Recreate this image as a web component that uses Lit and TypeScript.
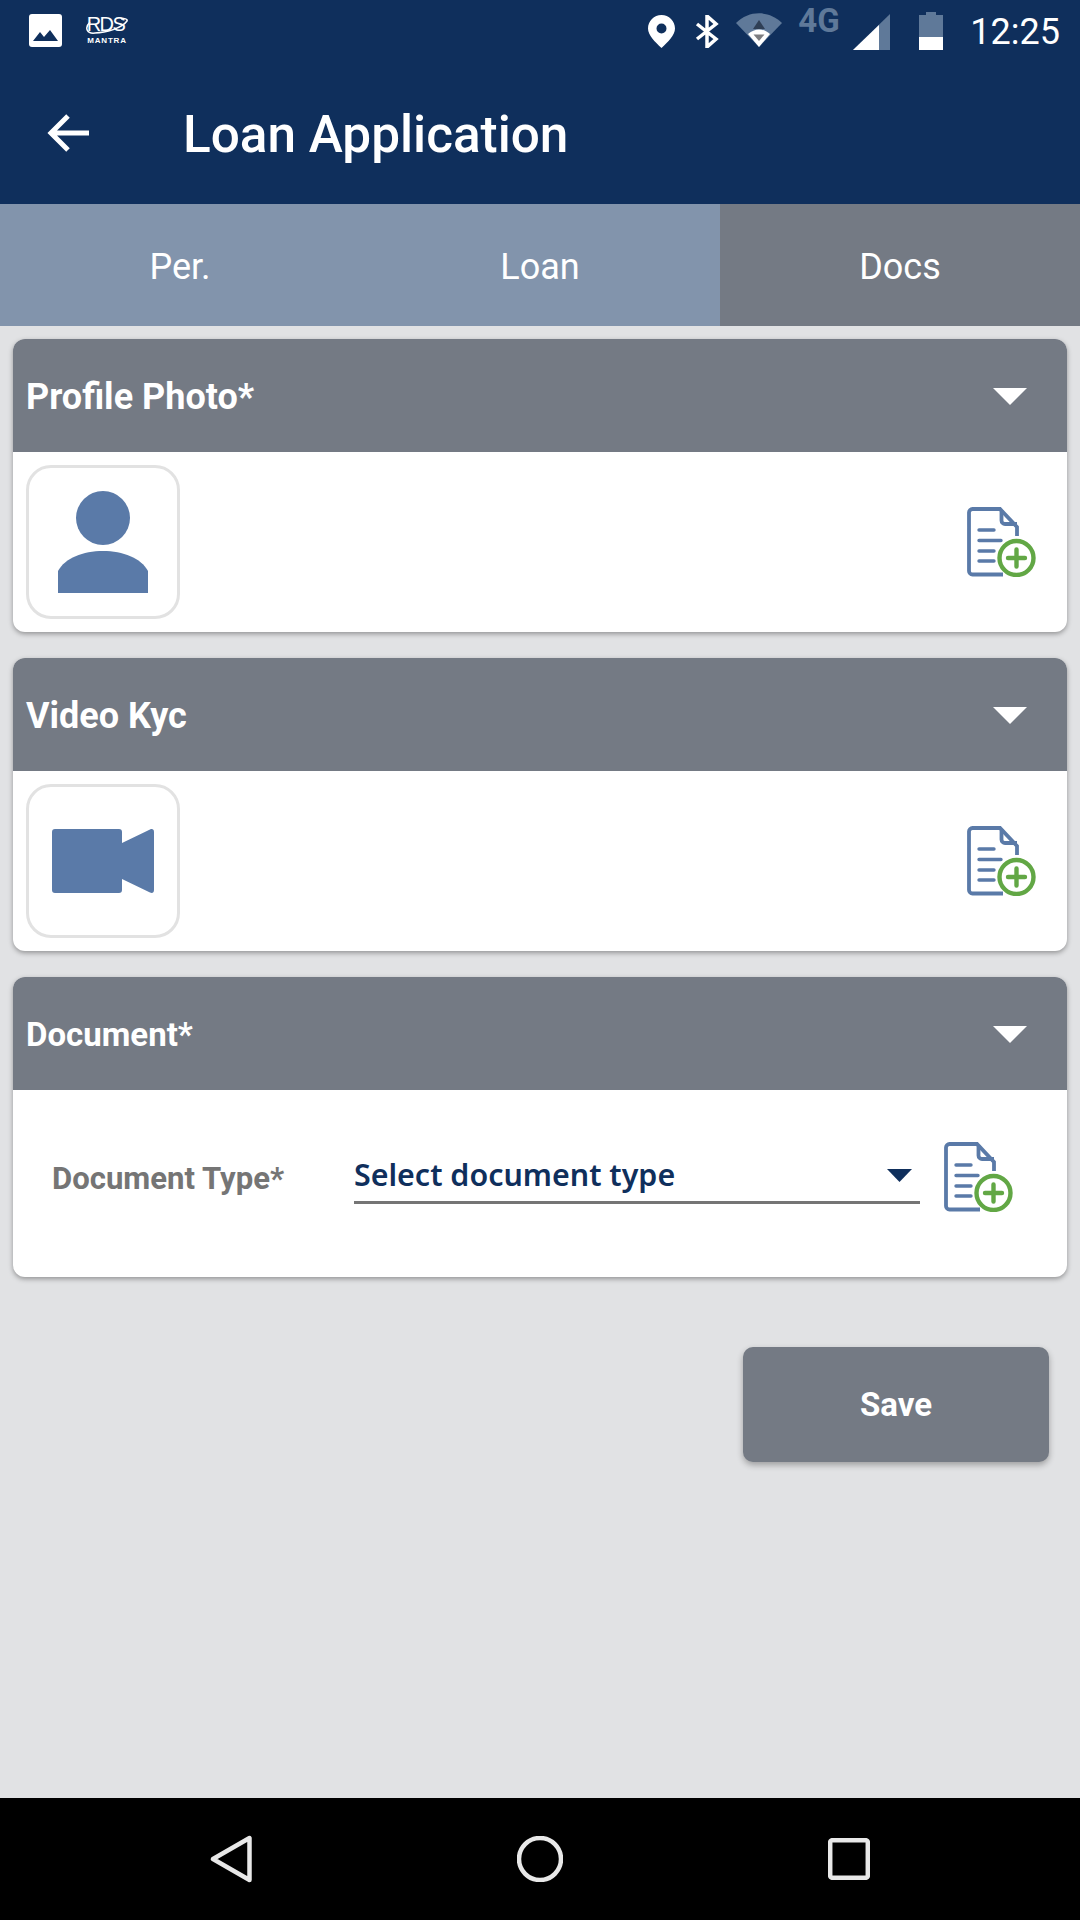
import { LitElement, html, css } from "lit";
import { customElement } from "lit/decorators.js";

const docIcon = html`<svg class="doc" viewBox="0 0 70 70" fill="none">
  <path d="M36 67.500H5.500a3.500 3.500 0 0 1-3.500-3.500V5.500A3.500 3.500 0 0 1 5.500 2H33L50 20V29" stroke="#5a7aa8" stroke-width="3.800"/>
  <path d="M34.500 3V13.500a3.500 3.500 0 0 0 3.500 3.500H50" stroke="#5a7aa8" stroke-width="3.800"/>
  <g stroke="#5a7aa8" stroke-width="3.400" stroke-linecap="round"><path d="M12 23H27M12 33.500H34M12 44H27M12 54H27"/></g>
  <circle cx="49.500" cy="51" r="17" fill="#fff" stroke="#62a745" stroke-width="4.400"/>
  <path d="M49.500 42.500V59.500M41 51H58" stroke="#62a745" stroke-width="4.400" stroke-linecap="round"/>
</svg>`;

const chevron = html`<svg class="chev" viewBox="0 0 34 17"><path d="M0 0H34L17 17Z" fill="#fff"/></svg>`;

@customElement("app-root")
export class AppRoot extends LitElement {
  static styles = css`
    :host { display: flex; flex-direction: column; width: 1080px; height: 1920px; font-family: Roboto, sans-serif; background: #e1e2e4; overflow: hidden; }
    .head { background: #0f2f5c; height: 204px; display: flex; flex-direction: column; flex: none; }
    .status { height: 64px; display: flex; align-items: flex-start; color: #fff; position: relative; }
    .status svg { display: block; flex: none; }
    .pic { width: 33px; height: 33px; margin: 14px 0 0 29px; }
    .logo { width: 42px; height: 30px; margin: 15px 0 0 24px; position: relative; display: flex; flex-direction: column; align-items: center; }
    .logo .r { font: 400 20px/18px "Liberation Sans Narrow", "Liberation Sans", sans-serif; letter-spacing: -1.500px; color: #fff; margin-left: -3px; }
    .logo .m { font: 700 8px/8px "Liberation Sans", sans-serif; letter-spacing: .8px; color: #fff; margin-top: 4px; }
    .logo svg.arc { position: absolute; left: 0; top: 2px; width: 42px; height: 20px; }
    .spacer { flex: 1; }
    .loc { width: 27px; height: 33px; margin-top: 15px; }
    .bt { width: 24px; height: 33px; margin: 15px 0 0 20px; }
    .wifi { width: 46px; height: 34px; margin: 13px 0 0 17px; }
    .g4 { font: 700 33px/24px Roboto, sans-serif; color: #5f7999; margin: 9px 0 0 16px; width: 44px; white-space: nowrap; }
    .sig { width: 37px; height: 36px; margin: 14px 0 0 11px; }
    .bat { width: 24px; height: 38px; margin: 12px 0 0 29px; }
    .time { font: 400 36px/34px Roboto, sans-serif; margin: 15px 20px 0 27px; }
    .bar { flex: 1; display: flex; align-items: center; color: #fff; }
    .back { width: 44px; height: 40px; margin-left: 47px; flex: none; margin-bottom: 2px; }
    .title { font: 500 51.300px/56px Roboto, sans-serif; margin-left: 92px; padding-top: 2px; }
    .tabs { height: 122px; flex: none; display: grid; grid-template-columns: repeat(3, 1fr); background: #8294ac; }
    .tab { display: flex; align-items: center; justify-content: center; color: #fff; font: 400 36px/40px Roboto, sans-serif; padding-top: 4px; }
    .tab.on { background: #747a84; }
    main { flex: 1; padding: 13px 13px 0; display: flex; flex-direction: column; gap: 26px; }
    .card { background: #fff; border-radius: 12px; box-shadow: 0 2px 5px rgba(0,0,0,.35); overflow: hidden; }
    .chd { height: 113px; background: #747a84; display: flex; align-items: center; justify-content: space-between; padding: 3px 40px 0 13px; box-sizing: border-box; color: #fff; font: 700 36px/44px Roboto, sans-serif; }
    .chd .small { font-size: 33px; }
    .chev { width: 34px; height: 17px; display: block; margin-bottom: 1px; }
    .cbd { height: 180px; display: flex; align-items: center; justify-content: space-between; padding: 0 30px 0 13px; box-sizing: border-box; }
    .box { width: 154px; height: 154px; box-sizing: border-box; border: 3px solid #e2e2e2; border-radius: 25px; display: flex; align-items: center; justify-content: center; }
    .box svg { display: block; }
    .doc { width: 70px; height: 70px; display: block; flex: none; }
    .form { height: 187px; display: flex; align-items: center; padding: 0 52px 0 39px; box-sizing: border-box; }
    .form .doc { margin-bottom: 14px; margin-left: 1px; }
    .lbl { font: 700 31.100px/36px Roboto, sans-serif; color: #757575; width: 302px; flex: none; margin-bottom: 10px; }
    .sel { width: 566px; height: 48px; box-sizing: border-box; border-bottom: 3px solid #757575; display: flex; align-items: center; justify-content: space-between; padding: 0 8px 6px 0; color: #0f2f5c; font: 600 30.400px/40px "Noto Sans", sans-serif; margin: 0 23px 8px 0; flex: none; }
    .sel svg { width: 25px; height: 13px; display: block; }
    .actions { display: flex; justify-content: flex-end; padding: 44px 18px 0 0; }
    .save { width: 306px; height: 115px; background: #747a84; color: #fff; border-radius: 10px; font: 700 33px/40px Roboto, sans-serif; box-shadow: 0 3px 6px rgba(0,0,0,.3); display: flex; align-items: center; justify-content: center; padding-top: 1px; box-sizing: border-box; }
    .nav { height: 122px; flex: none; background: #000; display: grid; grid-template-columns: repeat(3, 360px); justify-items: center; align-items: center; }
    .nav svg { display: block; }
    .nav .left { justify-self: end; margin-right: 108px; }
    .nav .right { justify-self: start; margin-left: 108px; }
  `;

  card(title: string, icon: unknown) {
    return html`<section class="card">
      <div class="chd"><span>${title}</span>${chevron}</div>
      <div class="cbd"><div class="box">${icon}</div>${docIcon}</div>
    </section>`;
  }

  render() {
    const person = html`<svg width="92" height="102" viewBox="0 0 92 102"><circle cx="46" cy="27" r="27" fill="#5a7aa8"/><path d="M1 102V80C8 67 26 60 46 60S84 67 91 80V102Z" fill="#5a7aa8"/></svg>`;
    const video = html`<svg width="102" height="64" viewBox="0 0 102 64"><path d="M3 0H67a3 3 0 0 1 3 3V14L98 .5C100 -.500 102 0 102 3V61C102 64 100 64.500 98 63.500L70 50V61a3 3 0 0 1-3 3H3a3 3 0 0 1-3-3V3a3 3 0 0 1 3-3Z" fill="#5a7aa8"/></svg>`;
    return html`
      <header class="head">
        <div class="status">
          <svg class="pic" viewBox="0 0 33 33"><rect width="33" height="33" rx="3" fill="#fff"/><path d="M4 27L11 18L15 23L21 16L29 27Z" fill="#0f2f5c"/></svg>
          <div class="logo">
            <span class="r">RDS</span><span class="m">MANTRA</span>
            <svg class="arc" viewBox="0 0 42 20" fill="none"><path d="M4 5C-2 11 1 17 9 16C20 16 36 11 41 4C42 2 38 1 35 2" stroke="#fff" stroke-width="1.500"/></svg>
          </div>
          <div class="spacer"></div>
          <svg class="loc" viewBox="0 0 27 33"><path fill-rule="evenodd" d="M13.500 0C21 0 27 6 27 13.500C27 20 20 27 13.500 33C7 27 0 20 0 13.500C0 6 6 0 13.500 0ZM13.500 8.500a5 5 0 1 0 0 10a5 5 0 0 0 0-10Z" fill="#fff"/></svg>
          <svg class="bt" viewBox="0 0 24 33" fill="none"><path d="M2 9L21 24L12 32V1L21 9L2 24" stroke="#fff" stroke-width="3.500"/></svg>
          <svg class="wifi" viewBox="0 0 46 34"><path d="M0 10C13 -3 33 -3 46 10L23 34Z" fill="#5f7999"/><path d="M12 21C19 15 27 15 34 21L23 34Z" fill="#fff"/><path d="M17.500 21.500H28.500L23 28Z" fill="#7d7d80"/><path d="M17 16L23 7L29 16Z" fill="#2f3f55"/></svg>
          <div class="g4">4G</div>
          <svg class="sig" viewBox="0 0 37 36"><path d="M37 0V36H0Z" fill="#5f7999"/><path d="M26 11V36H0Z" fill="#fff"/></svg>
          <svg class="bat" viewBox="0 0 24 38"><path d="M7 0H17V3H24V38H0V3H7Z" fill="#5f7999"/><rect y="25" width="24" height="13" fill="#fff"/></svg>
          <div class="time">12:25</div>
        </div>
        <div class="bar">
          <svg class="back" viewBox="0 0 44 40" fill="none"><path d="M42 20H4M21 3L4 20L21 37" stroke="#fff" stroke-width="5"/></svg>
          <div class="title">Loan Application</div>
        </div>
      </header>
      <nav class="tabs"><div class="tab">Per.</div><div class="tab">Loan</div><div class="tab on">Docs</div></nav>
      <main>
        ${this.card("Profile Photo*", person)}
        ${this.card("Video Kyc", video)}
        <section class="card">
          <div class="chd"><span class="small">Document*</span>${chevron}</div>
          <div class="form">
            <div class="lbl">Document Type*</div>
            <div class="sel"><span>Select document type</span><svg viewBox="0 0 25 13"><path d="M0 0H25L12.500 13Z" fill="#0f2f5c"/></svg></div>
            ${docIcon}
          </div>
        </section>
        <div class="actions"><div class="save">Save</div></div>
      </main>
      <footer class="nav">
        <svg class="left" width="42" height="48" viewBox="0 0 42 48" fill="none"><path d="M39.500 3V45L3 24Z" stroke="#e8e8e8" stroke-width="4.500" stroke-linejoin="round"/></svg>
        <svg width="46" height="46" viewBox="0 0 46 46" fill="none"><circle cx="23" cy="23" r="21" stroke="#e8e8e8" stroke-width="4.500"/></svg>
        <svg class="right" width="42" height="42" viewBox="0 0 42 42" fill="none"><rect x="2.200" y="2.200" width="37.600" height="37.600" rx="2" stroke="#e8e8e8" stroke-width="4.500"/></svg>
      </footer>
    `;
  }
}
